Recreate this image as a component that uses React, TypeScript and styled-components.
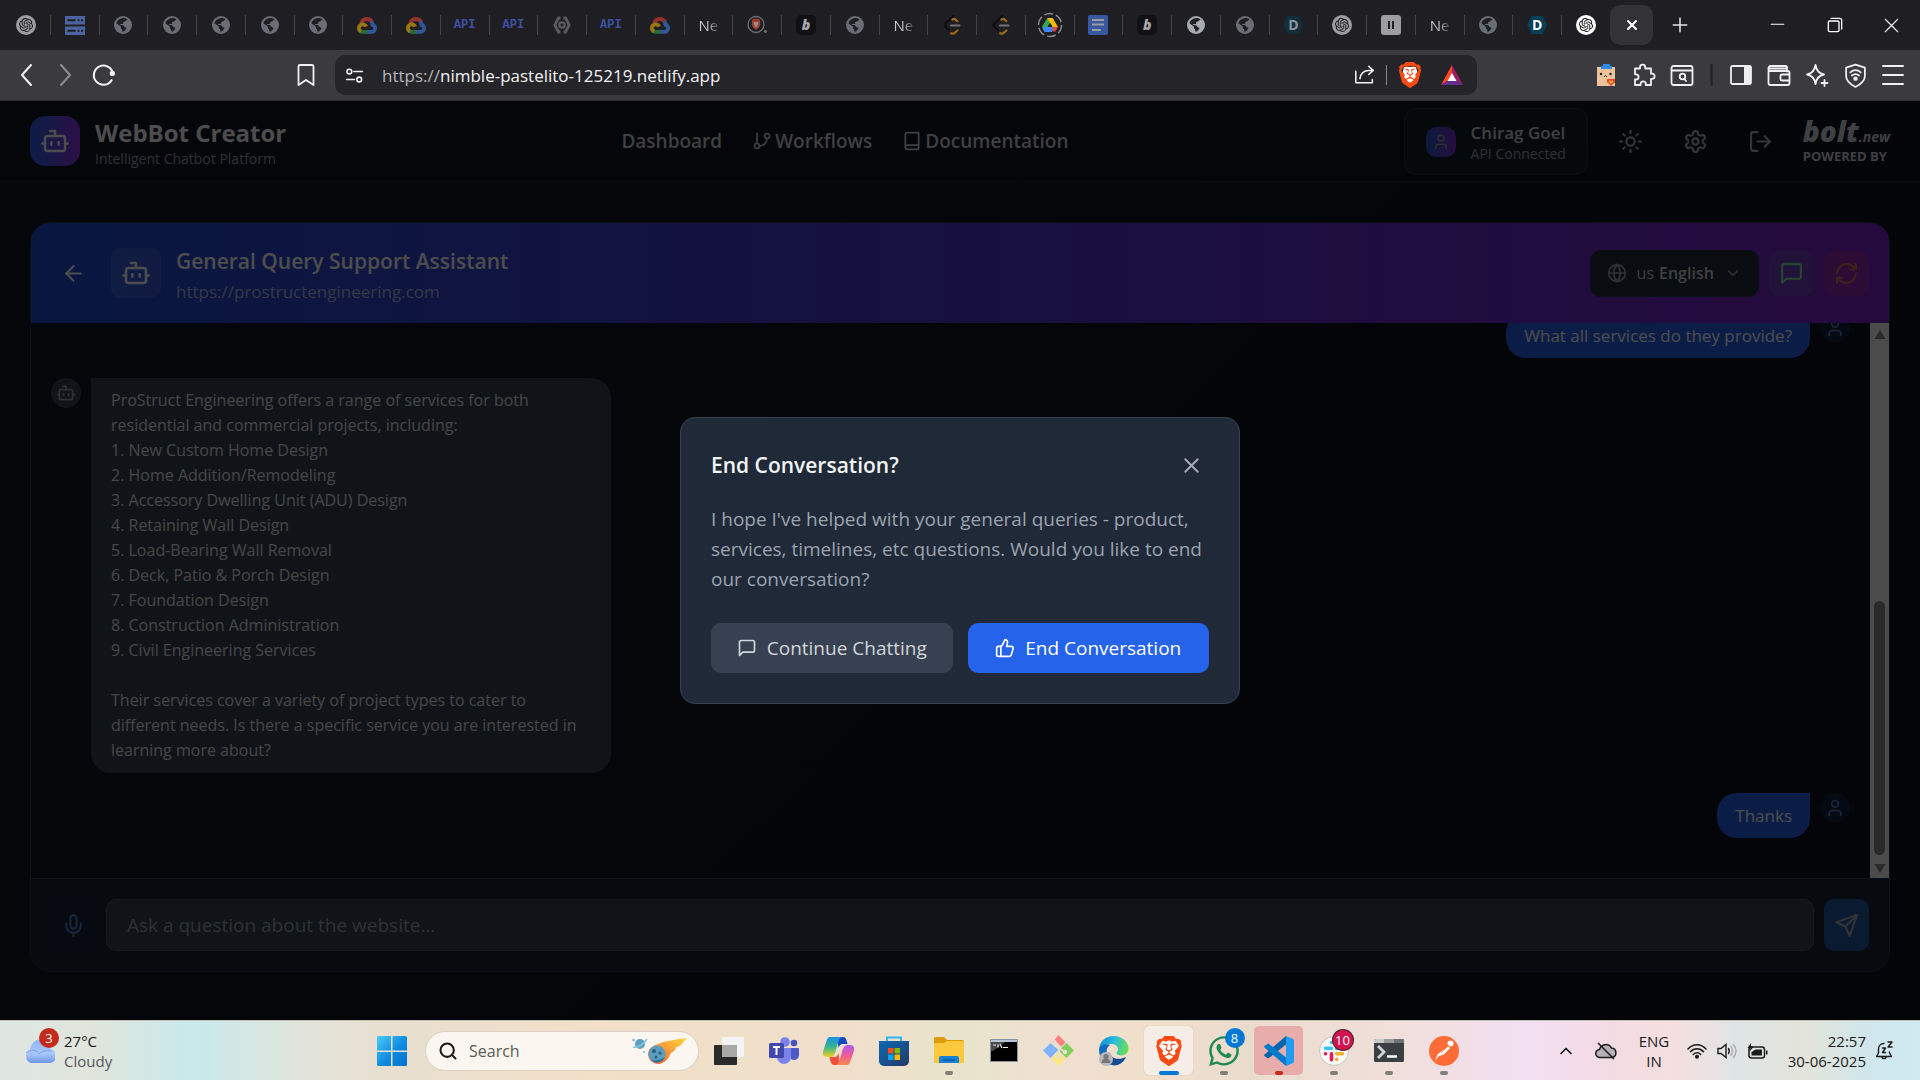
import React from "react";
import styled, { createGlobalStyle, css } from "styled-components";
import {
  ArrowLeft,
  Book,
  Bot,
  ChevronDown,
  ChevronUp,
  GitBranch,
  Globe,
  LogOut,
  Mic,
  RefreshCw,
  Search,
  Sun,
  User,
  X,
} from "lucide-react";
import { SiBrave, SiOpenai } from "react-icons/si";
import { FaWhatsapp } from "react-icons/fa";

const ui = `"Open Sans", "Noto Sans", sans-serif`;

const Global = createGlobalStyle`
  *, *::before, *::after { box-sizing: border-box; }
  body { margin: 0; background: #05070c; font-family: ${ui}; overflow: hidden; }
  button, input, select { font: inherit; color: inherit; border: 0; background: none; padding: 0; margin: 0; outline: none; }
  h1, h2, p { margin: 0; }
  svg { display: block; flex: none; }
`;

/* ---------- drawings ---------- */

type DrawProps = { size?: number; sw?: number; children?: React.ReactNode };
const Stroke = ({ size = 24, sw = 2, children }: DrawProps) => (
  <svg width={size} height={size} viewBox="0 0 24 24" fill="none" stroke="currentColor" strokeWidth={sw} strokeLinecap="round" strokeLinejoin="round">
    {children}
  </svg>
);

const ChatIcon = ({ size }: DrawProps) => (
  <Stroke size={size}>
    <path d="M21 15a2 2 0 0 1-2 2H7l-4 4V5a2 2 0 0 1 2-2h14a2 2 0 0 1 2 2z" />
  </Stroke>
);
const ThumbIcon = ({ size }: DrawProps) => (
  <Stroke size={size}>
    <path d="M7 10v12" />
    <path d="M15 5.88 14 10h5.83a2 2 0 0 1 1.92 2.56l-2.33 8A2 2 0 0 1 17.5 22H4a2 2 0 0 1-2-2v-8a2 2 0 0 1 2-2h2.76a2 2 0 0 0 1.79-1.11L12 2a3.13 3.13 0 0 1 3 3.88Z" />
  </Stroke>
);
const SendIcon = ({ size }: DrawProps) => (
  <Stroke size={size}>
    <path d="m22 2-7 20-4-9-9-4Z" />
    <path d="M22 2 11 13" />
  </Stroke>
);
const GearIcon = ({ size }: DrawProps) => (
  <Stroke size={size}>
    <path d="M12.22 2h-.44a2 2 0 0 0-2 2v.18a2 2 0 0 1-1 1.73l-.43.25a2 2 0 0 1-2 0l-.15-.08a2 2 0 0 0-2.73.73l-.22.38a2 2 0 0 0 .73 2.73l.15.1a2 2 0 0 1 1 1.72v.51a2 2 0 0 1-1 1.74l-.15.09a2 2 0 0 0-.73 2.73l.22.38a2 2 0 0 0 2.73.73l.15-.08a2 2 0 0 1 2 0l.43.25a2 2 0 0 1 1 1.73V20a2 2 0 0 0 2 2h.44a2 2 0 0 0 2-2v-.18a2 2 0 0 1 1-1.73l.43-.25a2 2 0 0 1 2 0l.15.08a2 2 0 0 0 2.73-.73l.22-.39a2 2 0 0 0-.73-2.73l-.15-.08a2 2 0 0 1-1-1.74v-.5a2 2 0 0 1 1-1.74l.15-.09a2 2 0 0 0 .73-2.73l-.22-.38a2 2 0 0 0-2.73-.73l-.15.08a2 2 0 0 1-2 0l-.43-.25a2 2 0 0 1-1-1.73V4a2 2 0 0 0-2-2z" />
    <circle cx="12" cy="12" r="3" />
  </Stroke>
);

const GlobeFav = () => (
  <svg width="18" height="18" viewBox="0 0 18 18">
    <circle cx="9" cy="9" r="9" fill="#a6acb2" />
    <path d="M8 2.200c2-.6 4.200-.1 5.600 1.300l-1.800 1.200c-.5 1-1.800.6-2.400 1.200-.9.9.3 1.500-.4 2.100H5.800c.3 1.300 2.300.9 3.100 1.300 1.600.7.700 1.600 2 1.900 1.200.2 1.900.5 1.200 1.700-.8 1.400-2 2.500-3.500 2.900l-.6-2.500c-1.300-.5-1.100-1.600-1.200-2.700L2.400 7.200C3 4.700 5.100 2.900 8 2.200z" fill="#1f1f24" />
  </svg>
);
const GptFav = () => (
  <svg width="20" height="20" viewBox="0 0 20 20">
    <circle cx="10" cy="10" r="10" fill="#fff" />
    <g transform="translate(3 3)" color="#111">
      <SiOpenai size={14} />
    </g>
  </svg>
);
const ServerFav = () => (
  <svg width="20" height="19" viewBox="0 0 20 19">
    <path d="M0 0h20v8.500H0zM0 10.500h20V19H0z" fill="#6f9bff" />
    <path d="M2.500 3.200h8v2h-8zM12.500 3.200h2v2h-2zM16 3.200h2v2h-2zM2.500 13.700h8v2h-8zM12.500 13.700h2v2h-2zM16 13.700h2v2h-2z" fill="#1f1f24" />
  </svg>
);
const CloudFav = () => (
  <svg width="20" height="17" viewBox="0 0 20 17" fill="none" strokeWidth="3.800">
    <path d="M4.200 6.500C5 3.600 7.300 2 10 2c2 0 3.900 1 4.900 2.700" stroke="#ea4335" />
    <path d="M14.400 4.300c.8 1.100 1.200 2.300 1.200 3.700 1.600.3 2.500 1.700 2.500 3.200 0 2.200-1.600 3.700-3.700 3.700H10" stroke="#4285f4" />
    <path d="M10.500 14.900H5.600c-1 0-1.700-.3-2.300-.7" stroke="#34a853" />
    <path d="M4 14.500C2.600 13.800 1.900 12.500 1.900 11c0-2.100 1.700-3.700 3.700-3.700 1.600 0 3 1 3.500 2.400" stroke="#fbbc04" />
  </svg>
);
const HexFav = () => (
  <svg width="18" height="18" viewBox="0 0 18 18" fill="none" stroke="#8a8a8a" strokeWidth="2.800">
    <path d="M7.500 2H5.500L1.800 9l3.700 7h2M10.500 2h2l3.700 7-3.700 7h-2" />
    <circle cx="9" cy="9" r="2.600" strokeWidth="2.400" />
  </svg>
);
const LeetFav = () => (
  <svg width="18" height="20" viewBox="0 0 18 20" fill="none" strokeWidth="2.200" strokeLinecap="round">
    <path d="M10.500 1 2.800 8.300c-1 1-1 2.600 0 3.600L6 15" stroke="#000" />
    <path d="M9.500 4.500c1.200-.9 2.200-.8 3.100.1l1.700 1.600M8.200 18.200c1.400.8 2.800.6 4-.7l2.200-2" stroke="#ffa116" />
    <path d="M8 10.500h8.500" stroke="#b3b3b3" />
  </svg>
);
const DriveFav = () => (
  <svg width="26" height="26" viewBox="0 0 26 26">
    <circle cx="13" cy="13" r="11.500" fill="none" stroke="#8a8b8f" strokeWidth="1.500" strokeDasharray="9 3" />
    <path d="M10.300 6h5.400l-2.700 4.800-5 8.200L5 14.700z" fill="#34a853" />
    <path d="M10.300 6h5.400l5.300 9h-5.300z" fill="#fbbc04" />
    <path d="M8 15h9l-1.800 5H7.600L5.300 16z" fill="#4285f4" />
    <path d="M16 15h5l-2.600 4.500h-2.600z" fill="#ea4335" />
  </svg>
);
const DocsFav = () => (
  <svg width="20" height="20" viewBox="0 0 20 20">
    <rect width="20" height="20" rx="2" fill="#4a86ff" />
    <path d="M4 5h12M4 9.500h12M4 15h9" stroke="#fff" strokeWidth="2" />
  </svg>
);
const BraveFav = () => (
  <svg width="20" height="20" viewBox="0 0 20 20">
    <circle cx="9" cy="9.500" r="8" fill="none" stroke="#b0b0b4" strokeWidth="1.300" />
    <path d="M5 5l2-1.200h4L13 5l.3 4.500c-.3 2.200-2 4-4.300 5.200-2.300-1.200-4-3-4.300-5.200z" fill="#ff5a32" />
    <path d="M6.500 7h5l-1 4L9 12.500 7.500 11z" fill="#f0e5e1" />
    <circle cx="18.500" cy="16.500" r="1.400" fill="#b0b0b4" />
  </svg>
);
const PauseFav = () => (
  <svg width="20" height="20" viewBox="0 0 20 20">
    <rect width="20" height="20" rx="3" fill="#fff" />
    <path d="M8 6v8M12 6v8" stroke="#222" strokeWidth="2" />
  </svg>
);

const BraveLion = ({ size = 24 }: DrawProps) => (
  <svg width={size} height={size} viewBox="0 0 24 24">
    <path d="M6.500 4.500h11l1 4-1.500 9L12 21.500 7 17.500l-1.500-9z" fill="#fff" />
    <g color="#fb4a14">
      <SiBrave size={24} />
    </g>
  </svg>
);
const RewardsIcon = () => (
  <svg width="22" height="20" viewBox="0 0 22 20">
    <path d="M11 0 0 20l11-7z" fill="#ff4724" />
    <path d="M11 0l11 20-11-7z" fill="#9e1f63" />
    <path d="M0 20h22l-6-4H6z" fill="#662d91" />
    <path d="M11 8l4.500 8h-9z" fill="#fff" />
  </svg>
);
const ShareIcon = () => (
  <Stroke size={22} sw={1.7}>
    <path d="M2 8v12.500h18V17" />
    <path d="M6.500 16c.5-5 4-8.500 9-9h5M16 2.500l5 4.500-5 4.500" />
  </Stroke>
);
const TuneIcon = () => (
  <Stroke size={19} sw={2}>
    <circle cx="5.500" cy="7" r="3" />
    <path d="M11 7h11M2 17h10" />
    <circle cx="18" cy="17" r="3" />
  </Stroke>
);
const ReloadIcon = () => (
  <Stroke size={25} sw={2}>
    <path d="M19.800 16.500A9.200 9.200 0 1 1 21 10" />
    <circle cx="20.500" cy="10" r="1.500" fill="currentColor" />
  </Stroke>
);
const ExtensionIcon = () => (
  <svg width="20" height="24" viewBox="0 0 20 24">
    <rect x="1" y="4" width="18" height="19" fill="#eac39a" />
    <path d="M5 3h2V1h7v2h2v3H5z" fill="#2e8be8" />
    <circle cx="5" cy="11" r="1.200" fill="#222" />
    <circle cx="14.500" cy="11" r="1.200" fill="#222" />
    <path d="M8 14l1.500-1.500L11 14" fill="none" stroke="#222" />
    <path d="M11 16h8v3l-4 4-4-4z" fill="#e8472f" />
    <path d="M13 17l2 1.500 2-1.500v2l-2 2-2-2z" fill="#f5b921" />
  </svg>
);
const PuzzleIcon = () => (
  <Stroke size={24} sw={1.8}>
    <path d="M3 5.500h5V4.300a2.600 2.600 0 0 1 5.200 0v1.200H19v5.200h1a2.600 2.600 0 0 1 0 5.200h-1V22h-5.200v-1a2.600 2.600 0 0 0-5.200 0v1H3v-5.500h1a2.600 2.600 0 0 0 0-5.200H3z" />
  </Stroke>
);
const TabSearchIcon = () => (
  <Stroke size={24} sw={1.8}>
    <rect x="1.500" y="3" width="21" height="19" rx="2" />
    <path d="M2 7.500h20" />
    <circle cx="12.500" cy="13.500" r="2.800" />
    <path d="m14.500 16 1.500 2" />
  </Stroke>
);
const SidebarIcon = () => (
  <svg width="22" height="20" viewBox="0 0 22 20">
    <rect x="1" y="1" width="20" height="18" rx="1.500" fill="none" stroke="#eee" strokeWidth="1.800" />
    <path d="M14 1h7v18h-7z" fill="#eee" />
  </svg>
);
const WalletIcon = () => (
  <Stroke size={24} sw={1.8}>
    <path d="M20 8.500V4.500a1.500 1.500 0 0 0-1.500-1.500H3.500a2 2 0 0 0-2 2v15a2 2 0 0 0 2 2h17a2 2 0 0 0 2-2V9.500a1.500 1.500 0 0 0-1.500-1.500H3M2 5.500h17" />
    <path d="M22 11.500h-7a1.500 1.500 0 0 0-1.500 1.500v3a1.500 1.500 0 0 0 1.500 1.500h7" />
  </Stroke>
);
const SparkleIcon = () => (
  <Stroke size={24} sw={1.8}>
    <path d="M10.500 2c.8 5 3 8.500 8.500 9.500-5.500 1-7.700 4.500-8.500 9.500-.8-5-3-8.500-8.500-9.500 5.500-1 7.700-4.500 8.500-9.500z" />
    <path d="M19.500 17v6M16.500 20h6" />
  </Stroke>
);
const VpnIcon = () => (
  <Stroke size={25} sw={1.7}>
    <path d="M12 1.500l9 3v8c0 4-4 8-9 10.500C7 20.500 3 16.500 3 12.500v-8z" />
    <path d="M7 9c3-2.500 7-2.500 10 0M8.500 12c2-1.600 5-1.600 7 0" />
    <circle cx="12" cy="15" r="1.300" fill="currentColor" />
  </Stroke>
);
const RestoreIcon = () => (
  <Stroke size={16} sw={2}>
    <rect x="2" y="6" width="16" height="16" rx="2" />
    <path d="M6 2h13a3 3 0 0 1 3 3v13" />
  </Stroke>
);

/* taskbar drawings */
const WeatherCloud = () => (
  <svg width="31" height="26" viewBox="0 0 31 26">
    <defs>
      <linearGradient id="cl" x1="0" y1="0" x2="0" y2="1">
        <stop offset="0" stopColor="#8fb4f7" />
        <stop offset=".6" stopColor="#a9c8fb" />
        <stop offset="1" stopColor="#6d94e6" />
      </linearGradient>
    </defs>
    <path d="M7 25a7 7 0 0 1-1-13C6.500 6 11 1.500 16.500 1.500S26 5.500 26.500 11A7 7 0 0 1 24 25z" fill="url(#cl)" />
    <path d="M2 15c4-4 9-4 13 1 3-3 8-4 12-3" fill="none" stroke="#7ea3ee" />
  </svg>
);
const WindowsIcon = () => (
  <svg width="30" height="30" viewBox="0 0 30 30">
    <defs>
      <linearGradient id="win" x1="0" y1="0" x2="1" y2="1">
        <stop offset="0" stopColor="#4cc9fb" />
        <stop offset=".55" stopColor="#0f8be0" />
        <stop offset="1" stopColor="#0070d0" />
      </linearGradient>
    </defs>
    <path d="M1.500 0H14v14.500H0V1.500A1.500 1.500 0 0 1 1.500 0zM15.500 0h13A1.500 1.500 0 0 1 30 1.500v13H15.500zM0 16h14v14H1.500A1.500 1.500 0 0 1 0 28.500zM15.500 16H30v12.500a1.500 1.500 0 0 1-1.500 1.500h-13z" fill="url(#win)" />
  </svg>
);
const MeteorArt = () => (
  <svg width="56" height="30" viewBox="0 0 56 30">
    <defs>
      <linearGradient id="met" x1="0" y1="1" x2="1" y2="0">
        <stop offset="0" stopColor="#ef5a3c" />
        <stop offset=".5" stopColor="#fb9a3d" />
        <stop offset="1" stopColor="#fdd835" />
      </linearGradient>
    </defs>
    <path d="M17 14c6-7 16-9 38-12-3 3-4 5-7 8l-4 1c0 2-1 4-5 6-2 5-6 10-12 11-8 0-13-7-10-14z" fill="url(#met)" />
    <circle cx="25" cy="18" r="8.500" fill="#5a9dbf" />
    <path d="M19 24a8.500 8.500 0 0 0 14-3c-4 3-9 4-14 3z" fill="#2f6f94" />
    <circle cx="22" cy="15" r="2" fill="#2c5f80" />
    <circle cx="28" cy="17" r="1.600" fill="#2c5f80" />
    <circle cx="24" cy="21" r="1.500" fill="#2c5f80" />
    <circle cx="8" cy="8" r="5" fill="#5f9fc2" />
    <path d="M1 11C6 12 12 8 15 3" fill="none" stroke="#86c5de" strokeWidth="1.500" />
    <circle cx="1.500" cy="4" r="1.200" fill="#6fb3dd" />
    <circle cx="12" cy="16" r="1" fill="#6fb3dd" />
  </svg>
);
const TaskViewIcon = () => (
  <svg width="30" height="28" viewBox="0 0 30 28">
    <rect x="0" y="8" width="23" height="20" rx="1" fill="#2a2a2a" />
    <rect x="8" y="0" width="22" height="20" rx="1" fill="#f4f4f4" />
    <path d="M8 8h15v12H8z" fill="#a9a9a8" />
  </svg>
);
const TeamsIcon = () => (
  <svg width="30" height="28" viewBox="0 0 30 28">
    <circle cx="25" cy="6" r="3.300" fill="#4b53bc" />
    <path d="M20 11h9a1 1 0 0 1 1 1v6a5 5 0 0 1-8 4z" fill="#5059c9" />
    <circle cx="16" cy="5" r="4.800" fill="#7b83eb" />
    <path d="M9 11h13v9a7 7 0 0 1-14 0z" fill="#7b83eb" />
    <rect x="0" y="6" width="15" height="15" rx="1.500" fill="#4048ae" />
    <path d="M4 10h7M7.500 10v8" stroke="#fff" strokeWidth="2" />
  </svg>
);
const CopilotIcon = () => (
  <svg width="31" height="28" viewBox="0 0 31 28">
    <defs>
      <linearGradient id="cpa" x1="0" y1="0" x2="0" y2="1">
        <stop offset="0" stopColor="#1a8fe3" />
        <stop offset=".5" stopColor="#35b58f" />
        <stop offset="1" stopColor="#f5d021" />
      </linearGradient>
      <linearGradient id="cpb" x1="0" y1="0" x2="0" y2="1">
        <stop offset="0" stopColor="#a95df0" />
        <stop offset=".5" stopColor="#ee5a9b" />
        <stop offset="1" stopColor="#f98a4b" />
      </linearGradient>
    </defs>
    <path d="M14 0h6c3 0 3.500 3 4.500 7h-5c-2 0-3 1-4 4z" fill="#1648c6" />
    <path d="M7 0h12c-3 1-4 6-6 13-1.500 5-2.500 7-6 7H4c-4 0-5-3-3.500-7l3-9C4.300 1.500 5.500 0 7 0z" fill="url(#cpa)" />
    <path d="M17 28h-6c-3 0-3.500-4-4.500-8h5c2 0 3-1 4-4z" fill="#f2503b" />
    <path d="M24 28H13c3-1 4-6 6-13 1.500-5 2.500-7 6-7h2c4 0 5 3 3.500 7l-3 9c-.8 2.500-2 4-3.500 4z" fill="url(#cpb)" />
  </svg>
);
const StoreIcon = () => (
  <svg width="30" height="30" viewBox="0 0 30 30">
    <defs>
      <linearGradient id="sto" x1="0" y1="0" x2="1" y2="1">
        <stop offset="0" stopColor="#0a68b5" />
        <stop offset="1" stopColor="#243a66" />
      </linearGradient>
    </defs>
    <path d="M8 6V1.500h14V6" fill="none" stroke="#2cb7ee" strokeWidth="2" />
    <path d="M0 5h30v20a5 5 0 0 1-5 5H5a5 5 0 0 1-5-5z" fill="url(#sto)" />
    <path d="M9 12h5.500v5.500H9z" fill="#f25022" />
    <path d="M15.500 12H21v5.500h-5.500z" fill="#7fba00" />
    <path d="M9 18.500h5.500V24H9z" fill="#00a4ef" />
    <path d="M15.500 18.500H21V24h-5.500z" fill="#ffb900" />
  </svg>
);
const FolderIcon = () => (
  <svg width="30" height="27" viewBox="0 0 30 27">
    <path d="M1.500 0H10l3 3h15.500A1.500 1.500 0 0 1 30 4.500V8H0V1.500A1.500 1.500 0 0 1 1.500 0z" fill="#dd9a0a" />
    <path d="M0 6h9l4-2h15.500A1.500 1.500 0 0 1 30 5.500V26H0z" fill="#fdc93c" />
    <path d="M5 26v-5a2 2 0 0 1 2-2h16a2 2 0 0 1 2 2v5z" fill="#1880d4" />
    <path d="M9 23h12" stroke="#0b5ca4" strokeWidth="1.500" />
  </svg>
);
const CmdIcon = () => (
  <svg width="28" height="24" viewBox="0 0 28 24">
    <rect x=".5" y=".5" width="27" height="22" fill="#000" stroke="#8b93a3" />
    <path d="M1 1h26v2H1z" fill="#b9c3d6" />
    <path d="M1 3h14L3 12H1z" fill="#4a4a4a" />
    <path d="M3 6h3M8 5.500v3M10 5l2 4M13 8.500h5" stroke="#eee" strokeWidth="1.200" />
  </svg>
);
const GitDiamond = () => (
  <svg width="31" height="31" viewBox="0 0 31 31">
    <path d="M15.500 0l7 7.500-5 5-6-6-2 1z" fill="#ff7f7f" />
    <path d="M7.500 8l8 7-8 8L0 15.500z" fill="#80b3ff" />
    <path d="M23.500 8l7.500 7.500-7.500 7.500-8-7.500z" fill="#81d05f" />
    <path d="M15.500 17l7 6.500-7 7.500-7-7.500z" fill="#ffe680" />
    <path d="M11 5l5 6v11M16 13l6 4" stroke="#eaded0" strokeWidth="2" fill="none" />
    <circle cx="16" cy="12" r="2.200" fill="#eaded0" />
    <circle cx="16" cy="22" r="2.200" fill="#eaded0" />
    <circle cx="22" cy="17" r="2.200" fill="#eaded0" />
  </svg>
);
const EdgeIcon = () => (
  <svg width="31" height="31" viewBox="0 0 31 31">
    <defs>
      <linearGradient id="edg" x1="0" y1=".3" x2="1" y2=".5">
        <stop offset="0" stopColor="#1289d8" />
        <stop offset=".5" stopColor="#29bedb" />
        <stop offset="1" stopColor="#6be04e" />
      </linearGradient>
    </defs>
    <path d="M1 14C2 6 8 1 15.500 1 24 1 30.500 7 30.500 13.500c0 4-3 7-7 7-3 0-5-1-5-2.500s1.500-1.500 1.500-4c0-3-3-5-7-5-6 0-11 4-12 5z" fill="url(#edg)" />
    <path d="M1 14c2-4 7-6 11-4-3 2-4 5-3 9 1 6 6 9 11 9-6 4-19 3-19-14z" fill="#0d6cc2" />
    <path d="M12 17c0 6 7 9 16 5-2 5-7 8.500-12.500 8.500C10 28 9 21 12 17z" fill="#164b93" />
    <circle cx="8" cy="24" r="7" fill="#b9b9b9" />
    <circle cx="8" cy="21.500" r="2.600" fill="#777" />
    <path d="M3.500 28a4.500 4.500 0 0 1 9 0z" fill="#777" />
  </svg>
);
const CodeIcon = () => (
  <svg width="30" height="30" viewBox="0 0 30 30">
    <path d="M22 0v8.500L5 22l-1.200.2L.5 20c-.5-.5-.5-1 0-1.500z" fill="#0065a9" />
    <path d="M22 30v-8.500L5 8l-1.200-.2L.5 10c-.5.500-.5 1 0 1.500z" fill="#007acc" />
    <path d="M22 0l7 3a2 2 0 0 1 1 1.500v21a2 2 0 0 1-1 1.500l-7 3z" fill="#1f9cf0" />
  </svg>
);
const SlackIcon = () => (
  <svg width="30" height="30" viewBox="0 0 30 30">
    <circle cx="15" cy="15" r="14.500" fill="#fafafa" stroke="#c9c2bd" />
    <g strokeWidth="3.600" strokeLinecap="round">
      <path d="M12.500 6.500v.1M6.500 12.300h6" stroke="#36c5f0" />
      <path d="M17.700 6.500v6M23.500 12.300h-.1" stroke="#2eb67d" />
      <path d="M17.700 17.700h6M17.700 23.500v-.1" stroke="#ecb22e" />
      <path d="M6.500 17.700h.1M12.500 17.700v6" stroke="#e01e5a" />
    </g>
  </svg>
);
const TerminalIcon = () => (
  <svg width="30" height="23" viewBox="0 0 30 23">
    <rect width="30" height="23" rx="1.500" fill="#3a3f42" />
    <path d="M0 1.500A1.500 1.500 0 0 1 1.500 0H10v4H0z" fill="#c9c9c9" />
    <path d="M10 0h10v4H10z" fill="#9a9a9a" />
    <path d="M20 0h8.500A1.500 1.500 0 0 1 30 1.500V4H20z" fill="#6f7375" />
    <path d="M4 7l6 6-6 6" fill="none" stroke="#d5d5d5" strokeWidth="2.800" />
    <path d="M13 17.500h10" stroke="#fff" strokeWidth="2.500" />
  </svg>
);
const PostmanIcon = () => (
  <svg width="30" height="30" viewBox="0 0 30 30">
    <circle cx="15" cy="15" r="15" fill="#ff6c37" />
    <circle cx="21.500" cy="7.500" r="3" fill="#fff" />
    <path d="M19 10.500l2 1.500-6 6.500-5 1.500-4 5 2.500-6.500 3.500-3z" fill="#fff" />
    <path d="M20 9l-8 8" stroke="#ff6c37" strokeWidth=".8" />
  </svg>
);
const CloudOffIcon = () => (
  <svg width="22" height="18" viewBox="0 0 22 18">
    <path d="M5 15.500a4 4 0 0 1-.5-8A6.500 6.500 0 0 1 16.500 6a4.800 4.800 0 0 1 .5 9.500z" fill="#b5b0b3" stroke="#1b1b1b" strokeWidth="1.500" />
    <path d="M3 1l16 16" stroke="#1b1b1b" strokeWidth="1.600" />
  </svg>
);
const WifiIcon = () => (
  <svg width="20" height="16" viewBox="0 0 20 16" fill="none" stroke="#1b1b1b" strokeWidth="1.500" strokeLinecap="round">
    <path d="M1 6C6 .3 14 .3 19 6M3.500 8.800c3.500-4 9.500-4 13 0M6.300 11.500c2-2.300 5.400-2.300 7.400 0" />
    <circle cx="10" cy="13.800" r="1.300" fill="#1b1b1b" />
  </svg>
);
const SpeakerIcon = () => (
  <svg width="20" height="16" viewBox="0 0 20 16" fill="none" strokeWidth="1.400" strokeLinecap="round" stroke="#1b1b1b">
    <path d="M1 5.500h3L9 1.500v13l-5-4H1zM11.500 5.500c1 1.500 1 3.500 0 5" />
    <path d="M14 3.500c2 2.500 2 6.500 0 9M16.500 1.500c3.300 3.800 3.300 9.200 0 13" stroke="#aaa" />
  </svg>
);
const BatteryIcon = () => (
  <svg width="21" height="16" viewBox="0 0 21 16">
    <rect x="2" y="4" width="15.500" height="11" rx="2.500" fill="none" stroke="#1b1b1b" strokeWidth="1.500" />
    <path d="M4.500 12.500V9l4-2.500H15v6zM19 7.500h1.500v4H19zM4 0L.5 5h3L2 9l5-5.500H4z" fill="#1b1b1b" />
  </svg>
);
const BellIcon = () => (
  <svg width="18" height="19" viewBox="0 0 18 19" fill="none" stroke="#1b1b1b" strokeWidth="1.400" strokeLinecap="round" strokeLinejoin="round">
    <path d="M9 2.500C5.500 2.500 3.500 5 3.500 8v4L1.500 15.500h15L14.500 12v-1M7 16.500c.5 1.500 3.500 1.500 4 0M7.500 7h3L7.500 11.500h3M13 1h4l-4 5h4" />
  </svg>
);

/* ---------- browser chrome ---------- */

const Screen = styled.div`
  display: flex;
  flex-direction: column;
  height: 100vh;
  font-size: 16px;
`;

const TabBar = styled.div`
  display: flex;
  align-items: center;
  height: 50px;
  background: #1f1e23;
`;
const TabStrip = styled.div`
  display: flex;
  flex: 1;
  min-width: 0;
  padding-left: 2px;
`;
const Tab = styled.button<{ $bright?: boolean }>`
  flex: 1 1 0;
  min-width: 0;
  height: 20px;
  display: flex;
  align-items: center;
  justify-content: center;
  border-right: 1px solid #45444a;
  &:last-child { border-right: 0; }
  svg { opacity: ${(p) => (p.$bright ? 1 : 0.56)}; }
  svg svg { opacity: 1; }
`;
const TabText = styled.span`
  color: transparent;
  background: linear-gradient(90deg, #c8c8cb 50%, #4a4a4f);
  background-clip: text;
  font-size: 15px;
  line-height: 20px;
`;
const ApiText = styled.span`
  color: #3c52a0;
  font: 700 12px/20px "Liberation Mono", monospace;
`;
const BTile = styled.span`
  width: 20px;
  height: 20px;
  border-radius: 5px;
  background: #111113;
  color: #a9a9ab;
  font: italic 800 14px/19px ${ui};
  text-align: center;
`;
const DTile = styled.span<{ $dim?: boolean }>`
  width: 20px;
  height: 18px;
  clip-path: polygon(22% 0, 78% 0, 100% 50%, 78% 100%, 22% 100%, 0 50%);
  background: ${(p) => (p.$dim ? "#112e3b" : "#063e56")};
  color: ${(p) => (p.$dim ? "#8f9496" : "#fff")};
  font: 700 14px/18px ${ui};
  text-align: center;
`;
const ActiveTab = styled.button`
  display: grid;
  place-items: center;
  width: 43px;
  height: 40px;
  border-radius: 10px;
  background: #333237;
  color: #fff;
`;
const NewTab = styled.button`
  display: grid;
  place-items: center;
  width: 54px;
  height: 40px;
  color: #e6e6e8;
`;
const WindowButtons = styled.div`
  display: flex;
  margin-left: 42px;
  color: #fff;
`;
const WindowButton = styled.button`
  display: grid;
  place-items: center;
  width: 57px;
  height: 50px;
`;

const Toolbar = styled.div`
  display: flex;
  align-items: center;
  height: 51px;
  padding: 0 8px;
  background: #3b3a3f;
  color: #f1f1f3;
  border-bottom: 1px solid #2d2c31;
`;
const ToolButton = styled.button<{ $dim?: boolean }>`
  display: grid;
  place-items: center;
  width: 38px;
  height: 40px;
  opacity: ${(p) => (p.$dim ? 0.45 : 1)};
`;
const BookmarkSlot = styled.div`
  margin-left: 165px;
`;
const UrlBar = styled.label`
  display: flex;
  align-items: center;
  flex: 1;
  min-width: 0;
  height: 40px;
  margin: 0 110px 0 10px;
  padding: 0 14px 0 10px;
  border-radius: 10px;
  background: #252429;
  font-size: 17px;
`;
const UrlScheme = styled.span`
  margin-left: 18px;
  color: #b4b4b8;
`;
const UrlInput = styled.input`
  flex: 1;
  min-width: 0;
  color: #f3f3f5;
`;
const Rule = styled.span<{ $dark?: boolean }>`
  width: 1px;
  height: 20px;
  margin: 0 10px;
  background: ${(p) => (p.$dark ? "#222126" : "#85858a")};
  outline: ${(p) => (p.$dark ? "1px solid #2c2b30" : "0")};
`;
const UrlTools = styled.div`
  display: flex;
  align-items: center;
  gap: 18px;
`;

/* ---------- page ---------- */

const Page = styled.div`
  position: relative;
  flex: 1;
  min-height: 0;
  display: flex;
  flex-direction: column;
  background: linear-gradient(135deg, #0f1522, #0f1220);
  color: #fff;
`;
const SiteHeader = styled.header`
  display: flex;
  align-items: center;
  justify-content: space-between;
  height: 81px;
  padding: 0 30px;
  border-bottom: 1px solid #1b222f;
`;
const Brand = styled.div`
  display: flex;
  align-items: center;
  gap: 15px;
`;
const BrandText = styled.div`
  padding-top: 3px;
`;
const Tile = styled.div<{ $size: number; $glass?: boolean }>`
  display: grid;
  place-items: center;
  width: ${(p) => p.$size}px;
  height: ${(p) => p.$size}px;
  border-radius: ${(p) => (p.$size > 40 && !p.$glass ? 15 : 10)}px;
  color: ${(p) => (p.$size > 40 ? "#fff" : "#aab0ba")};
  opacity: ${(p) => (p.$size > 40 ? 1 : 0.85)};
  background: ${(p) => (p.$glass ? "rgba(255, 255, 255, 0.1)" : "linear-gradient(90deg, #2563eb, #9333ea)")};
`;
const BrandName = styled.h1`
  font-size: 24px;
  line-height: 32px;
  font-weight: 700;
`;
const Small = styled.p`
  font-size: 14px;
  line-height: 20px;
  color: #9ca3af;
`;
const Nav = styled.nav`
  display: flex;
  gap: 30px;
`;
const NavLink = styled.a`
  display: flex;
  align-items: center;
  gap: 3px;
  color: #d1d5db;
  font-size: 19px;
  font-weight: 600;
  text-decoration: none;
`;
const HeaderTools = styled.div`
  display: flex;
  align-items: center;
  gap: 20px;
`;
const UserCard = styled.div`
  display: flex;
  align-items: center;
  gap: 15px;
  height: 67px;
  padding: 2px 21px 0;
  border: 1px solid #252e3b;
  border-radius: 12px;
  background: #161e2b;
`;
const UserName = styled.p`
  font-size: 17px;
  line-height: 23px;
  font-weight: 600;
  color: #d1d5db;
`;
const IconButton = styled.button<{ $tone?: "green" | "red" | "plain" }>`
  display: grid;
  place-items: center;
  width: 45px;
  height: 45px;
  border-radius: 10px;
  color: #aeb4be;
  ${(p) => p.$tone === "plain" && css`color: #fff;`}
  ${(p) => p.$tone === "green" && css`color: #86e89f; background: rgba(74, 222, 128, 0.14);`}
  ${(p) => p.$tone === "red" && css`color: #c9715c; background: rgba(239, 68, 68, 0.2);`}
`;
const BoltBadge = styled.a`
  display: flex;
  flex-direction: column;
  padding-top: 2px;
  color: #d1d5db;
  text-decoration: none;
  font-size: 13px;
  line-height: 17px;
  font-weight: 700;
`;
const BoltMark = styled.span`
  font-size: 28px;
  line-height: 23px;
  font-style: italic;
  font-weight: 800;
`;
const BoltSuffix = styled.small`
  font-size: 14px;
  font-weight: 700;
`;

const Main = styled.main`
  flex: 1;
  min-height: 0;
  display: flex;
  padding: 40px 30px 48px;
`;
const ChatCard = styled.section`
  flex: 1;
  min-width: 0;
  display: flex;
  flex-direction: column;
  overflow: hidden;
  border: 1px solid #2a3341;
  border-radius: 20px;
`;
const ChatHeader = styled.div`
  display: flex;
  align-items: center;
  justify-content: space-between;
  height: 100px;
  padding: 0 20px;
  background: linear-gradient(90deg, #1d4ed8, #7e22ce);
`;
const ChatHeading = styled.div`
  display: flex;
  align-items: center;
  gap: 15px;
`;
const ChatText = styled.div`
  padding-top: 2px;
`;
const ChatTitle = styled.h2`
  font-size: 21px;
  line-height: 35px;
  font-weight: 600;
`;
const ChatUrl = styled.p`
  font-size: 17px;
  line-height: 25px;
  color: #aebce8;
`;
const ChatActions = styled.div`
  display: flex;
  align-items: center;
  gap: 10px;
`;
const LanguagePicker = styled.label`
  display: flex;
  align-items: center;
  height: 47px;
  padding: 0 16px;
  border: 1px solid #2d3846;
  border-radius: 10px;
  background: #1f2937;
  color: #9ca3af;
  font-size: 16px;
`;
const Flag = styled.span`
  margin: 0 5px 0 10px;
  color: #c3c8d0;
`;
const LanguageSelect = styled.select`
  appearance: none;
  margin-right: 10px;
  color: #d1d5db;
  font-size: 16px;
  font-weight: 600;
`;
const Body = styled.div`
  flex: 1;
  min-height: 0;
  display: flex;
`;
const Messages = styled.div`
  flex: 1;
  min-width: 0;
  display: flex;
  flex-direction: column;
  justify-content: flex-end;
  gap: 20px;
  padding: 0 20px 40px;
  overflow: hidden;
`;
const Message = styled.div<{ $mine?: boolean }>`
  display: flex;
  flex: none;
  align-items: flex-start;
  gap: 10px;
  flex-direction: ${(p) => (p.$mine ? "row-reverse" : "row")};
`;
const Avatar = styled.span<{ $mine?: boolean }>`
  display: grid;
  place-items: center;
  flex: none;
  width: 30px;
  height: 30px;
  border-radius: 50%;
  color: ${(p) => (p.$mine ? "#4d84cc" : "#9ca3af")};
  background: ${(p) => (p.$mine ? "#13203f" : "#374151")};
`;
const Bubble = styled.div<{ $mine?: boolean }>`
  max-width: 520px;
  padding: ${(p) => (p.$mine ? "10px 18px" : "10px 20px")};
  border-radius: ${(p) => (p.$mine ? "20px 0 20px 20px" : "0 20px 20px 20px")};
  background: ${(p) => (p.$mine ? "#2563eb" : "#374151")};
  color: ${(p) => (p.$mine ? "#fff" : "#e5e7eb")};
  font-size: ${(p) => (p.$mine ? 17 : 16)}px;
  line-height: 25px;
  white-space: pre-line;
`;
const ScrollTrack = styled.div`
  display: flex;
  flex-direction: column;
  align-items: center;
  justify-content: space-between;
  width: 19px;
  padding: 7px 0 5px;
  background: #fcfcfc;
`;
const ScrollThumb = styled.div`
  width: 11px;
  height: 254px;
  margin: auto 0 9px;
  border-radius: 6px;
  background: #8b8b8b;
`;
const Composer = styled.form`
  display: flex;
  gap: 10px;
  padding: 20px;
  border-top: 1px solid #2d3643;
  background: #1a2430;
`;
const ComposerButton = styled.button<{ $send?: boolean }>`
  display: grid;
  place-items: center;
  width: 45px;
  height: 52px;
  border-radius: 10px;
  color: ${(p) => (p.$send ? "#a8adb5" : "#4a80c8")};
  background: ${(p) => (p.$send ? "#2457a3" : "#192237")};
`;
const Question = styled.input`
  flex: 1;
  min-width: 0;
  height: 52px;
  padding: 0 20px;
  border: 1px solid #4b5563;
  border-radius: 10px;
  background: #374151;
  font-size: 19px;
  &::placeholder { color: #9ca3af; opacity: 1; }
`;

/* ---------- dialog ---------- */

const Backdrop = styled.div`
  position: absolute;
  inset: 0;
  display: grid;
  place-items: center;
  background: rgba(0, 0, 0, 0.7);
`;
const Dialog = styled.div`
  width: 560px;
  padding: 30px;
  border: 1px solid #374151;
  border-radius: 15px;
  background: #1f2937;
`;
const DialogHead = styled.div`
  display: flex;
  align-items: center;
  justify-content: space-between;
  margin-bottom: 21px;
`;
const DialogTitle = styled.h2`
  color: #f3f4f6;
  font-size: 21px;
  line-height: 35px;
  font-weight: 600;
`;
const CloseButton = styled.button`
  display: grid;
  place-items: center;
  width: 35px;
  height: 35px;
  color: #a6adb9;
`;
const DialogText = styled.p`
  margin-bottom: 29px;
  color: #9ca3af;
  font-size: 19px;
  line-height: 30px;
`;
const DialogActions = styled.div`
  display: grid;
  grid-template-columns: 1fr 1fr;
  gap: 15px;
`;
const DialogButton = styled.button<{ $primary?: boolean }>`
  display: flex;
  align-items: center;
  justify-content: center;
  gap: 10px;
  height: 50px;
  border-radius: 10px;
  background: ${(p) => (p.$primary ? "#2563eb" : "#374151")};
  color: ${(p) => (p.$primary ? "#fff" : "#d1d5db")};
  font-size: 19px;
`;

/* ---------- taskbar ---------- */

const Taskbar = styled.footer`
  display: flex;
  align-items: center;
  height: 60px;
  padding: 0 18px 0 24px;
  border-top: 1px solid #c5c0b8;
  color: #1b1b1b;
  font-size: 15px;
  line-height: 20px;
  background: linear-gradient(
    90deg, #dfe6e2 0, #e0e5dc 5%, #c7e9ec 10%, #e2e4da 16%, #e8dfd0 20%, #f2e0c8 31%, #efe0c9 39%,
    #f1dfcc 44%, #e8e4cc 50%, #f0e0d0 55%, #f0dfcb 60%, #eadccd 65%, #f1dfdb 73%, #f2dff2 79.500%,
    #f3dbe3 84%, #f5dfdf 87%, #dfe4e6 90.500%, #e3e4da 94%, #cfe6ec 97.500%, #d0eaf2 100%
  );
`;
const Weather = styled.button`
  display: flex;
  align-items: center;
  gap: 9px;
  width: 340px;
  text-align: left;
`;
const Anchor = styled.span`
  position: relative;
  display: grid;
  place-items: center;
`;
const Badge = styled.span<{ $tone: "red" | "blue" | "pink" }>`
  position: absolute;
  top: ${(p) => (p.$tone === "red" ? -10 : -6)}px;
  right: -4px;
  min-width: 20px;
  height: 20px;
  border-radius: 10px;
  background: ${(p) => ({ red: "#c42b1c", blue: "#0078d4", pink: "#d3124f" })[p.$tone]};
  box-shadow: ${(p) => (p.$tone === "pink" ? "0 0 0 1px #4a2430" : "none")};
  color: #fff;
  font-size: 13px;
  line-height: 20px;
  text-align: center;
`;
const Muted = styled.span`
  color: #55585a;
`;
const AppButton = styled.button`
  display: flex;
  flex-direction: column;
  align-items: center;
  justify-content: flex-end;
  width: 55px;
  height: 59px;
  padding: 5px 3px;
`;
const AppFace = styled.span<{ $state?: string }>`
  position: relative;
  display: grid;
  place-items: center;
  width: 49px;
  height: 49px;
  border-radius: 5px;
  ${(p) => p.$state === "active" && css`background: #f6ede6; box-shadow: 0 0 1px #b9aca2;`}
  ${(p) => p.$state === "alert" && css`background: #e8adaa;`}
  &::after {
    content: "";
    position: absolute;
    bottom: 0;
    display: ${(p) => (p.$state ? "block" : "none")};
    width: ${(p) => (p.$state === "active" ? 20 : 8)}px;
    height: 4px;
    border-radius: 2px;
    background: ${(p) => (p.$state === "active" ? "#0078d4" : p.$state === "alert" ? "#c42b1c" : "#857f79")};
  }
`;
const TaskSearch = styled.label`
  display: flex;
  align-items: center;
  gap: 11px;
  width: 274px;
  height: 40px;
  margin: 0 2px 0 6px;
  padding: 0 10px 0 12px;
  border: 1px solid #ddd0c0;
  border-radius: 20px;
  background: #fbf6ef;
  input { flex: 1; min-width: 0; font-size: 16px; }
  input::placeholder { color: #5b5957; opacity: 1; }
`;
const Tray = styled.div`
  display: flex;
  align-items: center;
  margin-left: auto;
  font-size: 15px;
`;
const TrayButton = styled.button<{ $w: number; $end?: boolean }>`
  display: flex;
  flex-direction: column;
  align-items: ${(p) => (p.$end ? "flex-end" : "center")};
  justify-content: center;
  width: ${(p) => p.$w}px;
  height: 59px;
`;

type AppItem = { name: string; icon: React.ReactNode; state?: "open" | "active" | "alert"; badge?: string; tone?: "blue" | "pink" };
const apps: AppItem[] = [
  { name: "Task view", icon: <TaskViewIcon /> },
  { name: "Teams", icon: <TeamsIcon /> },
  { name: "Copilot", icon: <CopilotIcon /> },
  { name: "Store", icon: <StoreIcon /> },
  { name: "Files", icon: <FolderIcon />, state: "open" },
  { name: "Command prompt", icon: <CmdIcon /> },
  { name: "Git", icon: <GitDiamond /> },
  { name: "Edge", icon: <EdgeIcon /> },
  { name: "Brave", icon: <BraveLion size={30} />, state: "active" },
  { name: "WhatsApp", icon: <FaWhatsapp size={34} color="#1f8b52" />, state: "open", badge: "8", tone: "blue" },
  { name: "Code", icon: <CodeIcon />, state: "alert" },
  { name: "Slack", icon: <SlackIcon />, state: "open", badge: "10", tone: "pink" },
  { name: "Terminal", icon: <TerminalIcon />, state: "open" },
  { name: "Postman", icon: <PostmanIcon />, state: "open" },
];

const favs: Record<string, React.ReactNode> = {
  gpt: <GptFav />,
  server: <ServerFav />,
  globe: <GlobeFav />,
  cloud: <CloudFav />,
  api: <ApiText>API</ApiText>,
  hex: <HexFav />,
  ne: <TabText>Ne</TabText>,
  brave: <BraveFav />,
  b: <BTile>b</BTile>,
  leet: <LeetFav />,
  drive: <DriveFav />,
  docs: <DocsFav />,
  d: <DTile $dim>D</DTile>,
  pause: <PauseFav />,
  dBright: <DTile>D</DTile>,
};
const tabs = (
  "gpt server globe globe globe globe globe cloud cloud api api hex api cloud ne brave b globe ne " +
  "leet leet drive! docs b globe! globe d gpt pause ne globe dBright gpt!"
).split(" ");

const answer = `ProStruct Engineering offers a range of services for both residential and commercial projects, including:
1. New Custom Home Design
2. Home Addition/Remodeling
3. Accessory Dwelling Unit (ADU) Design
4. Retaining Wall Design
5. Load-Bearing Wall Removal
6. Deck, Patio & Porch Design
7. Foundation Design
8. Construction Administration
9. Civil Engineering Services

Their services cover a variety of project types to cater to different needs. Is there a specific service you are interested in learning more about?`;

export default function App() {
  return (
    <Screen>
      <Global />
      <TabBar>
        <TabStrip>
          {tabs.map((t, i) => (
            <Tab key={i} $bright={t.endsWith("!")} aria-label={`Tab ${i + 1}`}>
              {favs[t.replace("!", "")]}
            </Tab>
          ))}
        </TabStrip>
        <ActiveTab aria-label="Close tab"><X size={16} strokeWidth={3} /></ActiveTab>
        <NewTab aria-label="New tab"><Stroke size={18} sw={2}><path d="M12 3v18M3 12h18" /></Stroke></NewTab>
        <WindowButtons>
          <WindowButton aria-label="Minimize"><Stroke size={15} sw={1.8}><path d="M2 10h20" /></Stroke></WindowButton>
          <WindowButton aria-label="Restore"><RestoreIcon /></WindowButton>
          <WindowButton aria-label="Close"><Stroke size={15} sw={1.8}><path d="M2 2l20 20M22 2 2 22" /></Stroke></WindowButton>
        </WindowButtons>
      </TabBar>

      <Toolbar>
        <ToolButton aria-label="Back"><Stroke size={24} sw={2}><path d="M16 2 7 12l9 10" /></Stroke></ToolButton>
        <ToolButton aria-label="Forward" $dim><Stroke size={24} sw={2}><path d="M8 2l9 10-9 10" /></Stroke></ToolButton>
        <ToolButton aria-label="Reload"><ReloadIcon /></ToolButton>
        <BookmarkSlot>
          <ToolButton aria-label="Bookmark"><Stroke size={24} sw={1.8}><path d="M4.500 3.500a1.500 1.500 0 0 1 1.500-1.500h12a1.500 1.500 0 0 1 1.500 1.500V22L12 17l-7.500 5z" /></Stroke></ToolButton>
        </BookmarkSlot>
        <UrlBar>
          <TuneIcon />
          <UrlScheme>https://</UrlScheme>
          <UrlInput aria-label="Address" defaultValue="nimble-pastelito-125219.netlify.app" />
          <ShareIcon />
          <Rule />
          <UrlTools><BraveLion size={26} /><RewardsIcon /></UrlTools>
        </UrlBar>
        <ToolButton aria-label="Extension"><ExtensionIcon /></ToolButton>
        <ToolButton aria-label="Extensions"><PuzzleIcon /></ToolButton>
        <ToolButton aria-label="Search tabs"><TabSearchIcon /></ToolButton>
        <Rule $dark />
        <ToolButton aria-label="Sidebar"><SidebarIcon /></ToolButton>
        <ToolButton aria-label="Wallet"><WalletIcon /></ToolButton>
        <ToolButton aria-label="Assistant"><SparkleIcon /></ToolButton>
        <ToolButton aria-label="VPN"><VpnIcon /></ToolButton>
        <ToolButton aria-label="Menu"><Stroke size={24} sw={2}><path d="M2 3h20M2 12h20M2 21h20" /></Stroke></ToolButton>
      </Toolbar>

      <Page>
        <SiteHeader>
          <Brand>
            <Tile $size={50}><Bot size={30} /></Tile>
            <BrandText>
              <BrandName>WebBot Creator</BrandName>
              <Small>Intelligent Chatbot Platform</Small>
            </BrandText>
          </Brand>
          <Nav>
            <NavLink href="#dashboard">Dashboard</NavLink>
            <NavLink href="#workflows"><GitBranch size={20} />Workflows</NavLink>
            <NavLink href="#documentation"><Book size={20} />Documentation</NavLink>
          </Nav>
          <HeaderTools>
            <UserCard>
              <Tile $size={30}><User size={18} /></Tile>
              <div>
                <UserName>Chirag Goel</UserName>
                <Small>API Connected</Small>
              </div>
            </UserCard>
            <IconButton aria-label="Theme"><Sun size={25} /></IconButton>
            <IconButton aria-label="Settings"><GearIcon size={25} /></IconButton>
            <IconButton aria-label="Log out"><LogOut size={25} /></IconButton>
            <BoltBadge href="#bolt">
              <BoltMark>bolt<BoltSuffix>.new</BoltSuffix></BoltMark>
              POWERED BY
            </BoltBadge>
          </HeaderTools>
        </SiteHeader>

        <Main>
          <ChatCard>
            <ChatHeader>
              <ChatHeading>
                <IconButton $tone="plain" aria-label="Back to dashboard"><ArrowLeft size={25} /></IconButton>
                <Tile $size={50} $glass><Bot size={30} /></Tile>
                <ChatText>
                  <ChatTitle>General Query Support Assistant</ChatTitle>
                  <ChatUrl>https://prostructengineering.com</ChatUrl>
                </ChatText>
              </ChatHeading>
              <ChatActions>
                <LanguagePicker>
                  <Globe size={20} />
                  <Flag>us</Flag>
                  <LanguageSelect aria-label="Language" defaultValue="en">
                    <option value="en">English</option>
                  </LanguageSelect>
                  <ChevronDown size={18} />
                </LanguagePicker>
                <IconButton $tone="green" aria-label="Conversation"><ChatIcon size={25} /></IconButton>
                <IconButton $tone="red" aria-label="Restart"><RefreshCw size={25} /></IconButton>
              </ChatActions>
            </ChatHeader>
            <Body>
              <Messages>
                <Message $mine>
                  <Avatar $mine><User size={20} /></Avatar>
                  <Bubble $mine>What all services do they provide?</Bubble>
                </Message>
                <Message>
                  <Avatar><Bot size={20} /></Avatar>
                  <Bubble>{answer}</Bubble>
                </Message>
                <Message $mine>
                  <Avatar $mine><User size={20} /></Avatar>
                  <Bubble $mine>Thanks</Bubble>
                </Message>
              </Messages>
              <ScrollTrack>
                <svg width="12" height="9" viewBox="0 0 12 9"><path d="M6 0l5.500 9H.5z" fill="#8b8b8b" /></svg>
                <ScrollThumb />
                <svg width="12" height="9" viewBox="0 0 12 9"><path d="M6 9 .5 0h11z" fill="#8b8b8b" /></svg>
              </ScrollTrack>
            </Body>
            <Composer onSubmit={(e) => e.preventDefault()}>
              <ComposerButton type="button" aria-label="Speak"><Mic size={25} /></ComposerButton>
              <Question aria-label="Question" placeholder="Ask a question about the website..." />
              <ComposerButton $send aria-label="Send"><SendIcon size={25} /></ComposerButton>
            </Composer>
          </ChatCard>
        </Main>

        <Backdrop>
          <Dialog role="dialog" aria-labelledby="end-title">
            <DialogHead>
              <DialogTitle id="end-title">End Conversation?</DialogTitle>
              <CloseButton aria-label="Dismiss"><X size={25} strokeWidth={1.8} /></CloseButton>
            </DialogHead>
            <DialogText>
              I hope I've helped with your general queries - product, services, timelines, etc questions. Would you like to end our
              conversation?
            </DialogText>
            <DialogActions>
              <DialogButton><ChatIcon size={20} />Continue Chatting</DialogButton>
              <DialogButton $primary><ThumbIcon size={20} />End Conversation</DialogButton>
            </DialogActions>
          </Dialog>
        </Backdrop>
      </Page>

      <Taskbar>
        <Weather>
          <Anchor><WeatherCloud /><Badge $tone="red">3</Badge></Anchor>
          <span>27°C<br /><Muted>Cloudy</Muted></span>
        </Weather>
        <AppButton aria-label="Start"><AppFace><WindowsIcon /></AppFace></AppButton>
        <TaskSearch>
          <Search size={20} strokeWidth={2.5} />
          <input aria-label="Search" placeholder="Search" />
          <MeteorArt />
        </TaskSearch>
        {apps.map((a) => (
          <AppButton key={a.name} aria-label={a.name}>
            <AppFace $state={a.state}>
              <Anchor>
                {a.icon}
                {a.badge && <Badge $tone={a.tone!}>{a.badge}</Badge>}
              </Anchor>
            </AppFace>
          </AppButton>
        ))}
        <Tray>
          <TrayButton $w={40} aria-label="Hidden icons"><ChevronUp size={20} strokeWidth={2} /></TrayButton>
          <TrayButton $w={40} aria-label="Cloud sync"><CloudOffIcon /></TrayButton>
          <TrayButton $w={56}><span>ENG</span><span>IN</span></TrayButton>
          <TrayButton $w={30} aria-label="Network"><WifiIcon /></TrayButton>
          <TrayButton $w={30} aria-label="Volume"><SpeakerIcon /></TrayButton>
          <TrayButton $w={30} aria-label="Battery"><BatteryIcon /></TrayButton>
          <TrayButton $w={94} $end><span>22:57</span><span>30-06-2025</span></TrayButton>
          <TrayButton $w={36} aria-label="Notifications"><BellIcon /></TrayButton>
        </Tray>
      </Taskbar>
    </Screen>
  );
}
